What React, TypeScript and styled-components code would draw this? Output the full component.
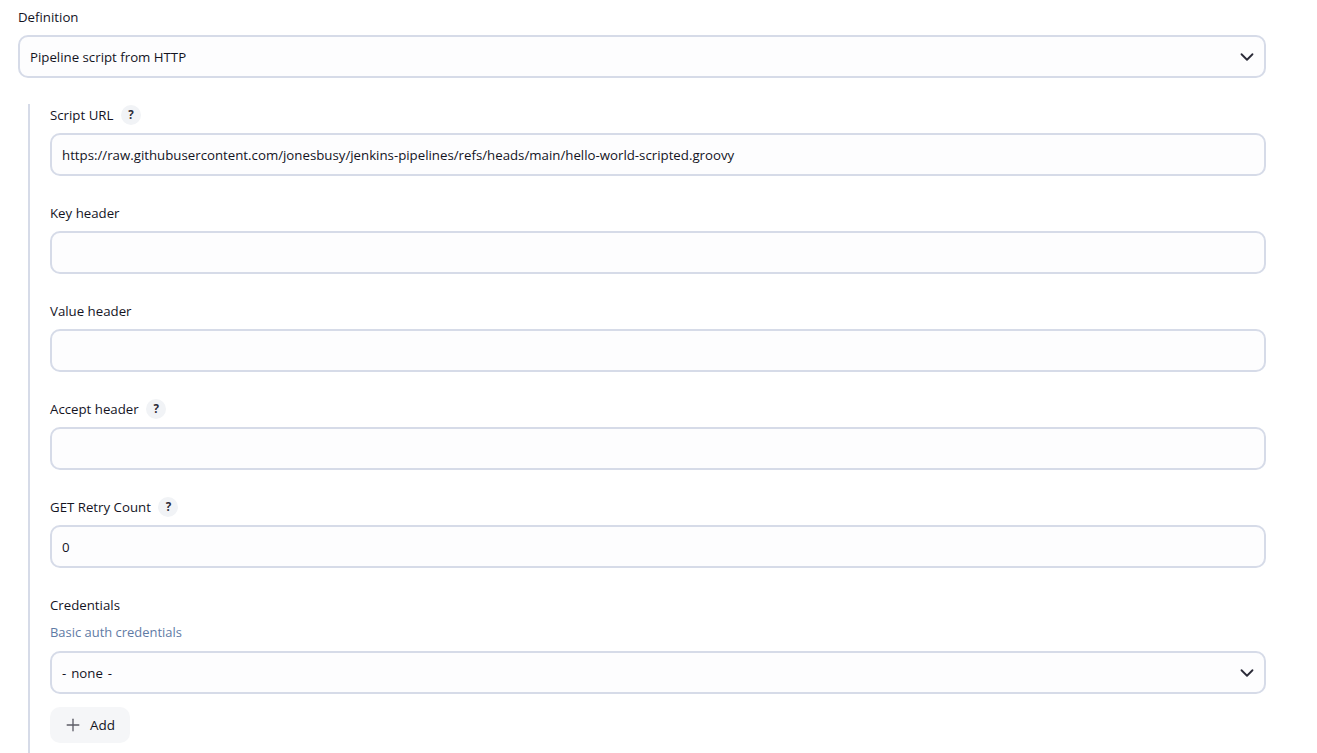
import React from 'react';
import styled, { createGlobalStyle } from 'styled-components';
import { ChevronDown, Plus } from 'lucide-react';

const GlobalStyle = createGlobalStyle`
  html, body {
    margin: 0;
    height: 100%;
    overflow: hidden;
    background: #ffffff;
  }
  body {
    font-family: "Open Sans", "Noto Sans", sans-serif;
    font-size: 13.25px;
    color: #14141f;
  }
`;

const Page = styled.div`
  box-sizing: border-box;
  width: 1248px;
  height: 753px;
  margin-left: 18px;
  padding-top: 7px;
`;

const LabelRow = styled.div`
  display: flex;
  align-items: center;
  gap: 7.5px;
  height: 20px;
  margin-bottom: 8px;
  line-height: 20px;
`;

const HelpBadge = styled.span`
  display: flex;
  align-items: center;
  justify-content: center;
  width: 20px;
  height: 20px;
  border-radius: 50%;
  background: #f1f3f6;
  font-size: 11.5px;
  font-weight: 700;
  color: #2b2b38;
`;

const Box = styled.div`
  box-sizing: border-box;
  display: flex;
  align-items: center;
  justify-content: space-between;
  height: 43px;
  padding: 0 10px;
  border: 2px solid #d6dbe8;
  border-radius: 10px;
  background: #fdfdfe;
  white-space: nowrap;
`;

const WideText = styled.span`
  word-spacing: 1.5px;
`;

const Chevron = styled(ChevronDown)`
  margin-right: -4px;
  color: #2b2b38;
`;

const Nested = styled.div`
  margin-top: 26px;
  margin-left: 10px;
  padding-left: 20px;
  border-left: 2px solid #d6dbe8;
  height: 649px;
`;

const Field = styled.div`
  padding-top: 1px;
  margin-bottom: 26px;
`;

const CredentialsField = styled.div`
  padding-top: 1px;
`;

const Hint = styled.div`
  height: 18px;
  margin-bottom: 10px;
  line-height: 18px;
  font-size: 12.95px;
  color: #5f7ba5;
`;

const AddButton = styled.button`
  display: flex;
  align-items: center;
  gap: 7px;
  width: 80px;
  height: 36px;
  margin-top: 13px;
  padding: 0 0 0 13px;
  border: none;
  border-radius: 10px;
  background: #f5f6f8;
  font-family: inherit;
  font-size: 13.5px;
  color: #14141f;
`;

const PlusIcon = styled(Plus)`
  color: #5c5c66;
`;

const fields = [
  { label: 'Script URL', help: true, value: 'https://raw.githubusercontent.com/jonesbusy/jenkins-pipelines/refs/heads/main/hello-world-scripted.groovy' },
  { label: 'Key header', help: false, value: '' },
  { label: 'Value header', help: false, value: '' },
  { label: 'Accept header', help: true, value: '' },
  { label: 'GET Retry Count', help: true, value: '0' },
];

export default function App() {
  return (
    <>
      <GlobalStyle />
      <Page>
        <LabelRow>Definition</LabelRow>
        <Box>
          Pipeline script from HTTP
          <Chevron size={22} strokeWidth={2} />
        </Box>
        <Nested>
          {fields.map(({ label, help, value }) => (
            <Field key={label}>
              <LabelRow>
                {label}
                {help && <HelpBadge>?</HelpBadge>}
              </LabelRow>
              <Box>{value}</Box>
            </Field>
          ))}
          <CredentialsField>
            <LabelRow>Credentials</LabelRow>
            <Hint>Basic auth credentials</Hint>
            <Box>
              <WideText>- none -</WideText>
              <Chevron size={22} strokeWidth={2} />
            </Box>
            <AddButton>
              <PlusIcon size={20} strokeWidth={1.6} />
              Add
            </AddButton>
          </CredentialsField>
        </Nested>
      </Page>
    </>
  );
}
